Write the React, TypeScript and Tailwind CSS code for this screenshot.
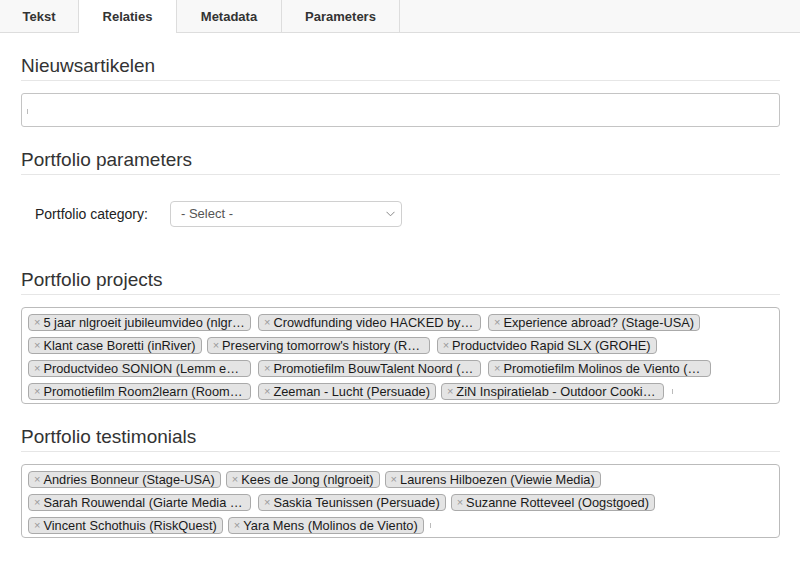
import React from "react";

type Tag = { label: string; trunc?: boolean };

const projects: Tag[] = [
  { label: "5 jaar nlgroeit jubileumvideo (nlgr…", trunc: true },
  { label: "Crowdfunding video HACKED by…", trunc: true },
  { label: "Experience abroad? (Stage-USA)" },
  { label: "Klant case Boretti (inRiver)" },
  { label: "Preserving tomorrow's history (R…", trunc: true },
  { label: "Productvideo Rapid SLX (GROHE)" },
  { label: "Productvideo SONION (Lemm en…", trunc: true },
  { label: "Promotiefilm BouwTalent Noord (…", trunc: true },
  { label: "Promotiefilm Molinos de Viento (…", trunc: true },
  { label: "Promotiefilm Room2learn (Room…", trunc: true },
  { label: "Zeeman - Lucht (Persuade)" },
  { label: "ZiN Inspiratielab - Outdoor Cooki…", trunc: true },
];

const testimonials: Tag[] = [
  { label: "Andries Bonneur (Stage-USA)" },
  { label: "Kees de Jong (nlgroeit)" },
  { label: "Laurens Hilboezen (Viewie Media)" },
  { label: "Sarah Rouwendal (Giarte Media …", trunc: true },
  { label: "Saskia Teunissen (Persuade)" },
  { label: "Suzanne Rotteveel (Oogstgoed)" },
  { label: "Vincent Schothuis (RiskQuest)" },
  { label: "Yara Mens (Molinos de Viento)" },
];

function Chip({ tag }: { tag: Tag }) {
  return (
    <div
      className={
        "flex items-center h-[17px] border border-[#aaa] bg-[#e4e4e4] rounded-[4px] pl-[5px] pr-[5px] text-[12.8px] leading-[15px] text-[#1a1a1a] whitespace-nowrap " +
        (tag.trunc ? "w-[223px] mr-[2px]" : "")
      }
    >
      <span className="text-[11px] text-[#999] mr-[3px] leading-[15px] shrink-0">×</span>
      <span className="overflow-hidden text-ellipsis whitespace-nowrap">{tag.label}</span>
    </div>
  );
}

function Caret() {
  return (
    <div className="h-[17px] w-[3px] flex items-end justify-center pb-[6px]">
      <div className="w-[1px] h-[5px] bg-[#bbb]" />
    </div>
  );
}

function TagBox({ tags }: { tags: Tag[] }) {
  return (
    <div className="mt-[12px] border border-[#bbb] rounded-[4px] pl-[6px] pr-[6px] pt-[6px] pb-[3px] flex flex-wrap gap-x-[5px] gap-y-[6px]">
      {tags.map((t) => (
        <Chip key={t.label} tag={t} />
      ))}
      <Caret />
    </div>
  );
}

function Heading({ children, className }: { children: React.ReactNode; className: string }) {
  return (
    <h2
      className={
        "text-[19px] leading-[22px] pb-[3px] border-b border-[#e6e6e6] text-[#333] font-normal " + className
      }
    >
      {children}
    </h2>
  );
}

export default function App() {
  const tabs = [
    { label: "Tekst", w: "w-[79px]", active: false },
    { label: "Relaties", w: "w-[98px]", active: true },
    { label: "Metadata", w: "w-[105px]", active: false },
    { label: "Parameters", w: "w-[118px]", active: false },
  ];
  return (
    <div className="w-[800px] h-[562px] bg-white font-['Liberation_Sans',Arial,sans-serif] text-[#333] overflow-hidden">
      <div className="flex h-[33px] bg-[#f8f8f8]">
        {tabs.map((t) => (
          <div
            key={t.label}
            className={
              "h-full flex items-center justify-center pt-[1px] border-r border-[#ddd] text-[13px] font-bold text-[#333] " +
              t.w +
              (t.active ? " bg-white" : " border-b")
            }
          >
            {t.label}
          </div>
        ))}
        <div className="flex-1 border-b border-[#ddd]" />
      </div>

      <div className="pl-[21px] pr-[20px]">
        <Heading className="mt-[22px]">Nieuwsartikelen</Heading>
        <div className="mt-[12px] h-[34px] border border-[#c4c4c4] rounded-[3px] flex items-center pl-[5px]">
          <div className="w-[1px] h-[5px] bg-[#bbb] mt-[2px]" />
        </div>

        <Heading className="mt-[22px]">Portfolio parameters</Heading>
        <div className="mt-[26px] flex items-center pl-[14px]">
          <div className="w-[135px] text-[14px] text-[#222]">Portfolio category:</div>
          <div className="w-[232px] h-[26px] border border-[#d0d0d0] rounded-[4px] flex items-center justify-between pl-[10px] pr-[6px] text-[13px] text-[#555]">
            <span>- Select -</span>
            <svg width="9" height="6" viewBox="0 0 9 6" fill="none">
              <polyline points="0.5,0.8 4.5,4.8 8.5,0.8" stroke="#888" strokeWidth="1" />
            </svg>
          </div>
        </div>

        <Heading className="mt-[42px]">Portfolio projects</Heading>
        <TagBox tags={projects} />

        <Heading className="mt-[22px]">Portfolio testimonials</Heading>
        <TagBox tags={testimonials} />
      </div>
    </div>
  );
}
